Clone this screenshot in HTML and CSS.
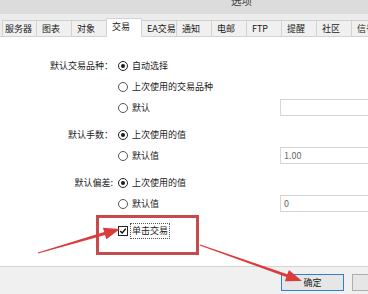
FILE: index.html
```html
<!DOCTYPE html>
<html lang="zh-CN">
<head>
<meta charset="utf-8">
<title>选项</title>
<link rel="stylesheet" href="styles.css">
</head>
<body>
<div class="win">
  <div class="titlebar"><span class="title">选项</span></div>
  <div class="tabs">
    <div class="tab first">服务器</div>
    <div class="tab">图表</div>
    <div class="tab">对象</div>
    <div class="tab active">交易</div>
    <div class="tab">EA交易</div>
    <div class="tab">通知</div>
    <div class="tab">电邮</div>
    <div class="tab">FTP</div>
    <div class="tab">提醒</div>
    <div class="tab">社区</div>
    <div class="tab">信号</div>
  </div>
  <div class="panel">
    <div class="group">
      <div class="lbl">默认交易品种：</div>
      <div class="opt"><span class="radio on"></span>自动选择</div>
      <div></div>
      <div></div>
      <div class="opt"><span class="radio"></span>上次使用的交易品种</div>
      <div></div>
      <div></div>
      <div class="opt"><span class="radio"></span>默认</div>
      <div><span class="input"></span></div>
    </div>
    <div class="group">
      <div class="lbl">默认手数：</div>
      <div class="opt"><span class="radio on"></span>上次使用的值</div>
      <div></div>
      <div></div>
      <div class="opt"><span class="radio"></span>默认值</div>
      <div><span class="input">1.00</span></div>
    </div>
    <div class="group">
      <div class="lbl">默认偏差:</div>
      <div class="opt"><span class="radio on"></span>上次使用的值</div>
      <div></div>
      <div></div>
      <div class="opt"><span class="radio"></span>默认值</div>
      <div><span class="input">0</span></div>
    </div>
    <div class="group checkrow">
      <div></div>
      <div class="opt tight"><span class="check"><svg viewBox="0 0 10 10" width="8" height="8"><path d="M1.5 5 L4 7.5 L8.5 2" fill="none" stroke="#111" stroke-width="1.8"/></svg></span><span class="focus">单击交易</span></div>
      <div></div>
    </div>
  </div>
  <div class="footer">
    <button class="btn primary">确定</button>
    <button class="btn">取消</button>
  </div>
  <div class="redbox"></div>
  <svg class="arrows" width="368" height="294" viewBox="0 0 368 294">
    <polygon points="38.1,253.5 37.9,252.5 104.2,232.1 102.9,227.7 120,229 106.3,239.3 105,234.9" fill="#dc3b3b"/>
    <polygon points="199.8,245.5 200.2,244.5 287.4,274.3 288.9,270 302,281 284.9,281.3 286.4,277.1" fill="#dc3b3b"/>
  </svg>
</div>
</body>
</html>
```
FILE: styles.css
```css
html, body {
  margin: 0;
  padding: 0;
}
body {
  width: 368px;
  height: 294px;
  overflow: hidden;
  background: #f0f0f0;
  font-family: "Noto Sans CJK SC", "Noto Sans", sans-serif;
  font-size: 9px;
  color: #1b1b1b;
}
.win {
  position: relative;
  width: 420px;
  height: 294px;
  display: flex;
  flex-direction: column;
}
.titlebar {
  flex: none;
  height: 14px;
  box-sizing: border-box;
  background: #dcdcdc;
  padding-left: 231px;
  overflow: hidden;
}
.title {
  display: block;
  font-size: 10.5px;
  line-height: 10px;
  margin-top: -4px;
  color: #444;
}
.tabs {
  flex: none;
  display: flex;
  align-items: flex-end;
  height: 18px;
  padding: 4px 0 0 2px;
  background: #ececec;
}
.tab {
  width: 36px;
  height: 16px;
  box-sizing: border-box;
  border: 1px solid #d2d2d2;
  border-bottom: none;
  margin-right: -1px;
  background: #f0f0f0;
  padding-left: 5px;
  line-height: 15px;
  white-space: nowrap;
  overflow: hidden;
}
.tab.first {
  width: 35px;
  padding-left: 2px;
}
.tab.active {
  height: 19px;
  background: #fff;
  margin-bottom: -1px;
  position: relative;
  z-index: 1;
  line-height: 16px;
}
.panel {
  flex: none;
  height: 231px;
  box-sizing: border-box;
  background: #fff;
  border-top: 1px solid #d2d2d2;
  border-bottom: 1px solid #d2d2d2;
  padding-top: 18px;
}
.group {
  display: grid;
  grid-template-columns: 118px 162px 140px;
  grid-auto-rows: 21px;
  align-items: center;
  margin-bottom: 6px;
}
.group.checkrow {
  margin-top: 2px;
}
.lbl {
  text-align: right;
  padding-right: 5px;
}
.opt {
  display: flex;
  align-items: center;
  gap: 4px;
  white-space: nowrap;
}
.opt.tight {
  gap: 2px;
}
.radio {
  flex: none;
  width: 10px;
  height: 10px;
  box-sizing: border-box;
  border: 1px solid #555;
  border-radius: 50%;
  background: #fff;
  display: flex;
  align-items: center;
  justify-content: center;
}
.radio.on {
  border-color: #222;
}
.radio.on::after {
  content: "";
  width: 4px;
  height: 4px;
  border-radius: 50%;
  background: #1a1a1a;
}
.input {
  display: block;
  height: 17px;
  box-sizing: border-box;
  border: 1px solid #d6d6d6;
  padding-left: 3px;
  line-height: 15px;
  color: #6a6a6a;
  background: #fff;
}
.check {
  flex: none;
  width: 10px;
  height: 10px;
  box-sizing: border-box;
  border: 1px solid #222;
  background: #fff;
  display: flex;
  align-items: center;
  justify-content: center;
}
.check svg {
  display: block;
}
.focus {
  border: 1px dotted #555;
  padding: 0 1px;
  line-height: 14px;
}
.footer {
  flex: 1;
  display: flex;
  gap: 8px;
  padding: 7px 0 0 281px;
}
.btn {
  width: 63px;
  height: 17px;
  box-sizing: border-box;
  border: 1px solid #adadad;
  background: #e6e6e6;
  font-family: inherit;
  font-size: 9px;
  color: #1b1b1b;
  padding: 0;
  line-height: 15px;
}
.btn.primary {
  border-color: #2b7fd4;
}
.redbox {
  position: absolute;
  left: 96px;
  top: 215px;
  width: 103px;
  height: 40px;
  box-sizing: border-box;
  border: 3px solid #c64b4d;
}
.arrows {
  position: absolute;
  left: 0;
  top: 0;
  pointer-events: none;
}
```
